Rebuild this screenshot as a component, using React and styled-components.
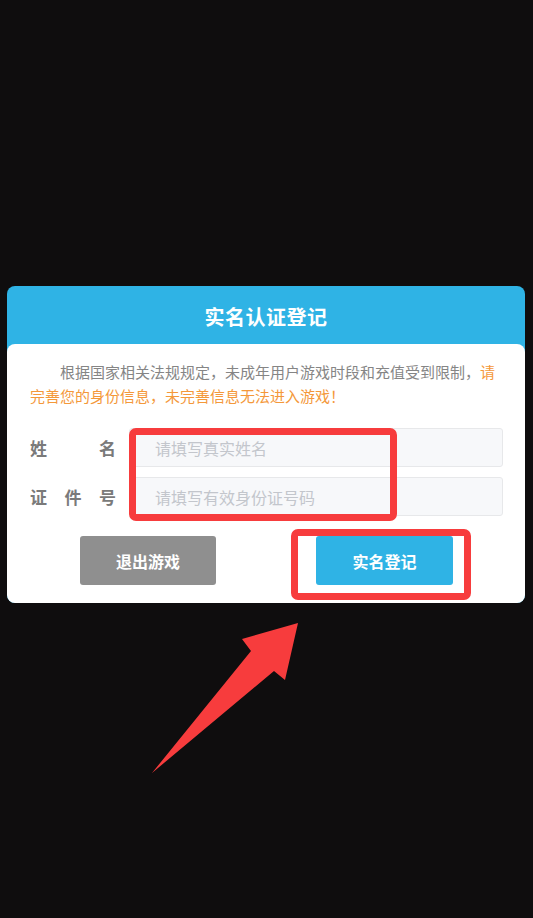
import React from 'react';
import styled, { createGlobalStyle } from 'styled-components';

const Global = createGlobalStyle`
  html, body { margin: 0; padding: 0; background: #0f0d0e; }
  * { box-sizing: border-box; }
  body { font-family: "Noto Sans CJK SC", "Noto Sans", sans-serif; }
`;

const red = '#f73c3d';
const blue = '#2fb3e5';

const Screen = styled.div`
  position: relative;
  width: 533px;
  height: 918px;
  padding: 286px 8px 0 7px;
  background: #0f0d0e;
  overflow: hidden;
`;

const Dialog = styled.div`
  width: 518px;
  border-radius: 8px;
  background: ${blue};
  overflow: hidden;
`;

const Header = styled.div`
  height: 58px;
  display: flex;
  align-items: center;
  justify-content: center;
  color: #fff;
  font-size: 20px;
  font-weight: 700;
  padding-top: 2px;
  letter-spacing: 0.5px;
`;

const Body = styled.div`
  background: #fff;
  border-radius: 8px 8px 0 0;
  padding: 16px 22px 18px 23px;
`;

const Notice = styled.p`
  margin: 0;
  font-size: 15px;
  line-height: 24px;
  color: #858585;
  text-indent: 30px;
  span { color: #f4983a; }
`;

const Form = styled.div`
  margin-top: 20px;
  display: flex;
  flex-direction: column;
  gap: 10px;
`;

const Row = styled.div`
  display: flex;
  align-items: center;
  gap: 13px;
`;

const Label = styled.div`
  width: 86px;
  font-size: 17px;
  font-weight: 700;
  color: #7a7a7a;
  text-align: justify;
  text-align-last: justify;
`;

const Input = styled.input`
  flex: 1;
  height: 39px;
  border: 1px solid #e7e8ea;
  border-radius: 3px;
  background: #f7f8fa;
  padding: 0 0 0 25px;
  font-family: inherit;
  font-size: 16px;
  outline: none;
  &::placeholder { color: #c3c6cc; }
`;

const Actions = styled.div`
  margin-top: 20px;
  display: flex;
  gap: 100px;
  padding-left: 50px;
`;

const Button = styled.button`
  width: ${p => p.$w}px;
  height: 49px;
  border: none;
  border-radius: 3px;
  background: ${p => p.$bg};
  color: #fff;
  font-family: inherit;
  font-size: 16px;
  font-weight: 700;
`;

const Mark = styled.div`
  position: absolute;
  border: 7px solid ${red};
  border-radius: 7px;
`;

const Arrow = styled.svg`
  position: absolute;
  left: 0;
  top: 0;
  pointer-events: none;
`;

export default function App() {
  return (
    <>
      <Global />
      <Screen>
        <Dialog>
          <Header>实名认证登记</Header>
          <Body>
            <Notice>
              根据国家相关法规规定，未成年用户游戏时段和充值受到限制，<span>请完善您的身份信息，未完善信息无法进入游戏！</span>
            </Notice>
            <Form>
              <Row>
                <Label>姓名</Label>
                <Input placeholder="请填写真实姓名" />
              </Row>
              <Row>
                <Label>证件号</Label>
                <Input placeholder="请填写有效身份证号码" />
              </Row>
            </Form>
            <Actions>
              <Button $w={136} $bg="#8f8f8f">退出游戏</Button>
              <Button $w={137} $bg={blue}>实名登记</Button>
            </Actions>
          </Body>
        </Dialog>
        <Mark style={{ left: 129, top: 428, width: 268, height: 93 }} />
        <Mark style={{ left: 291, top: 529, width: 180, height: 71 }} />
        <Arrow width="533" height="918" viewBox="0 0 533 918">
          <polygon
            fill={red}
            points="298,623 285,680 274,671 152,773 251,651 242,639"
          />
        </Arrow>
      </Screen>
    </>
  );
}
